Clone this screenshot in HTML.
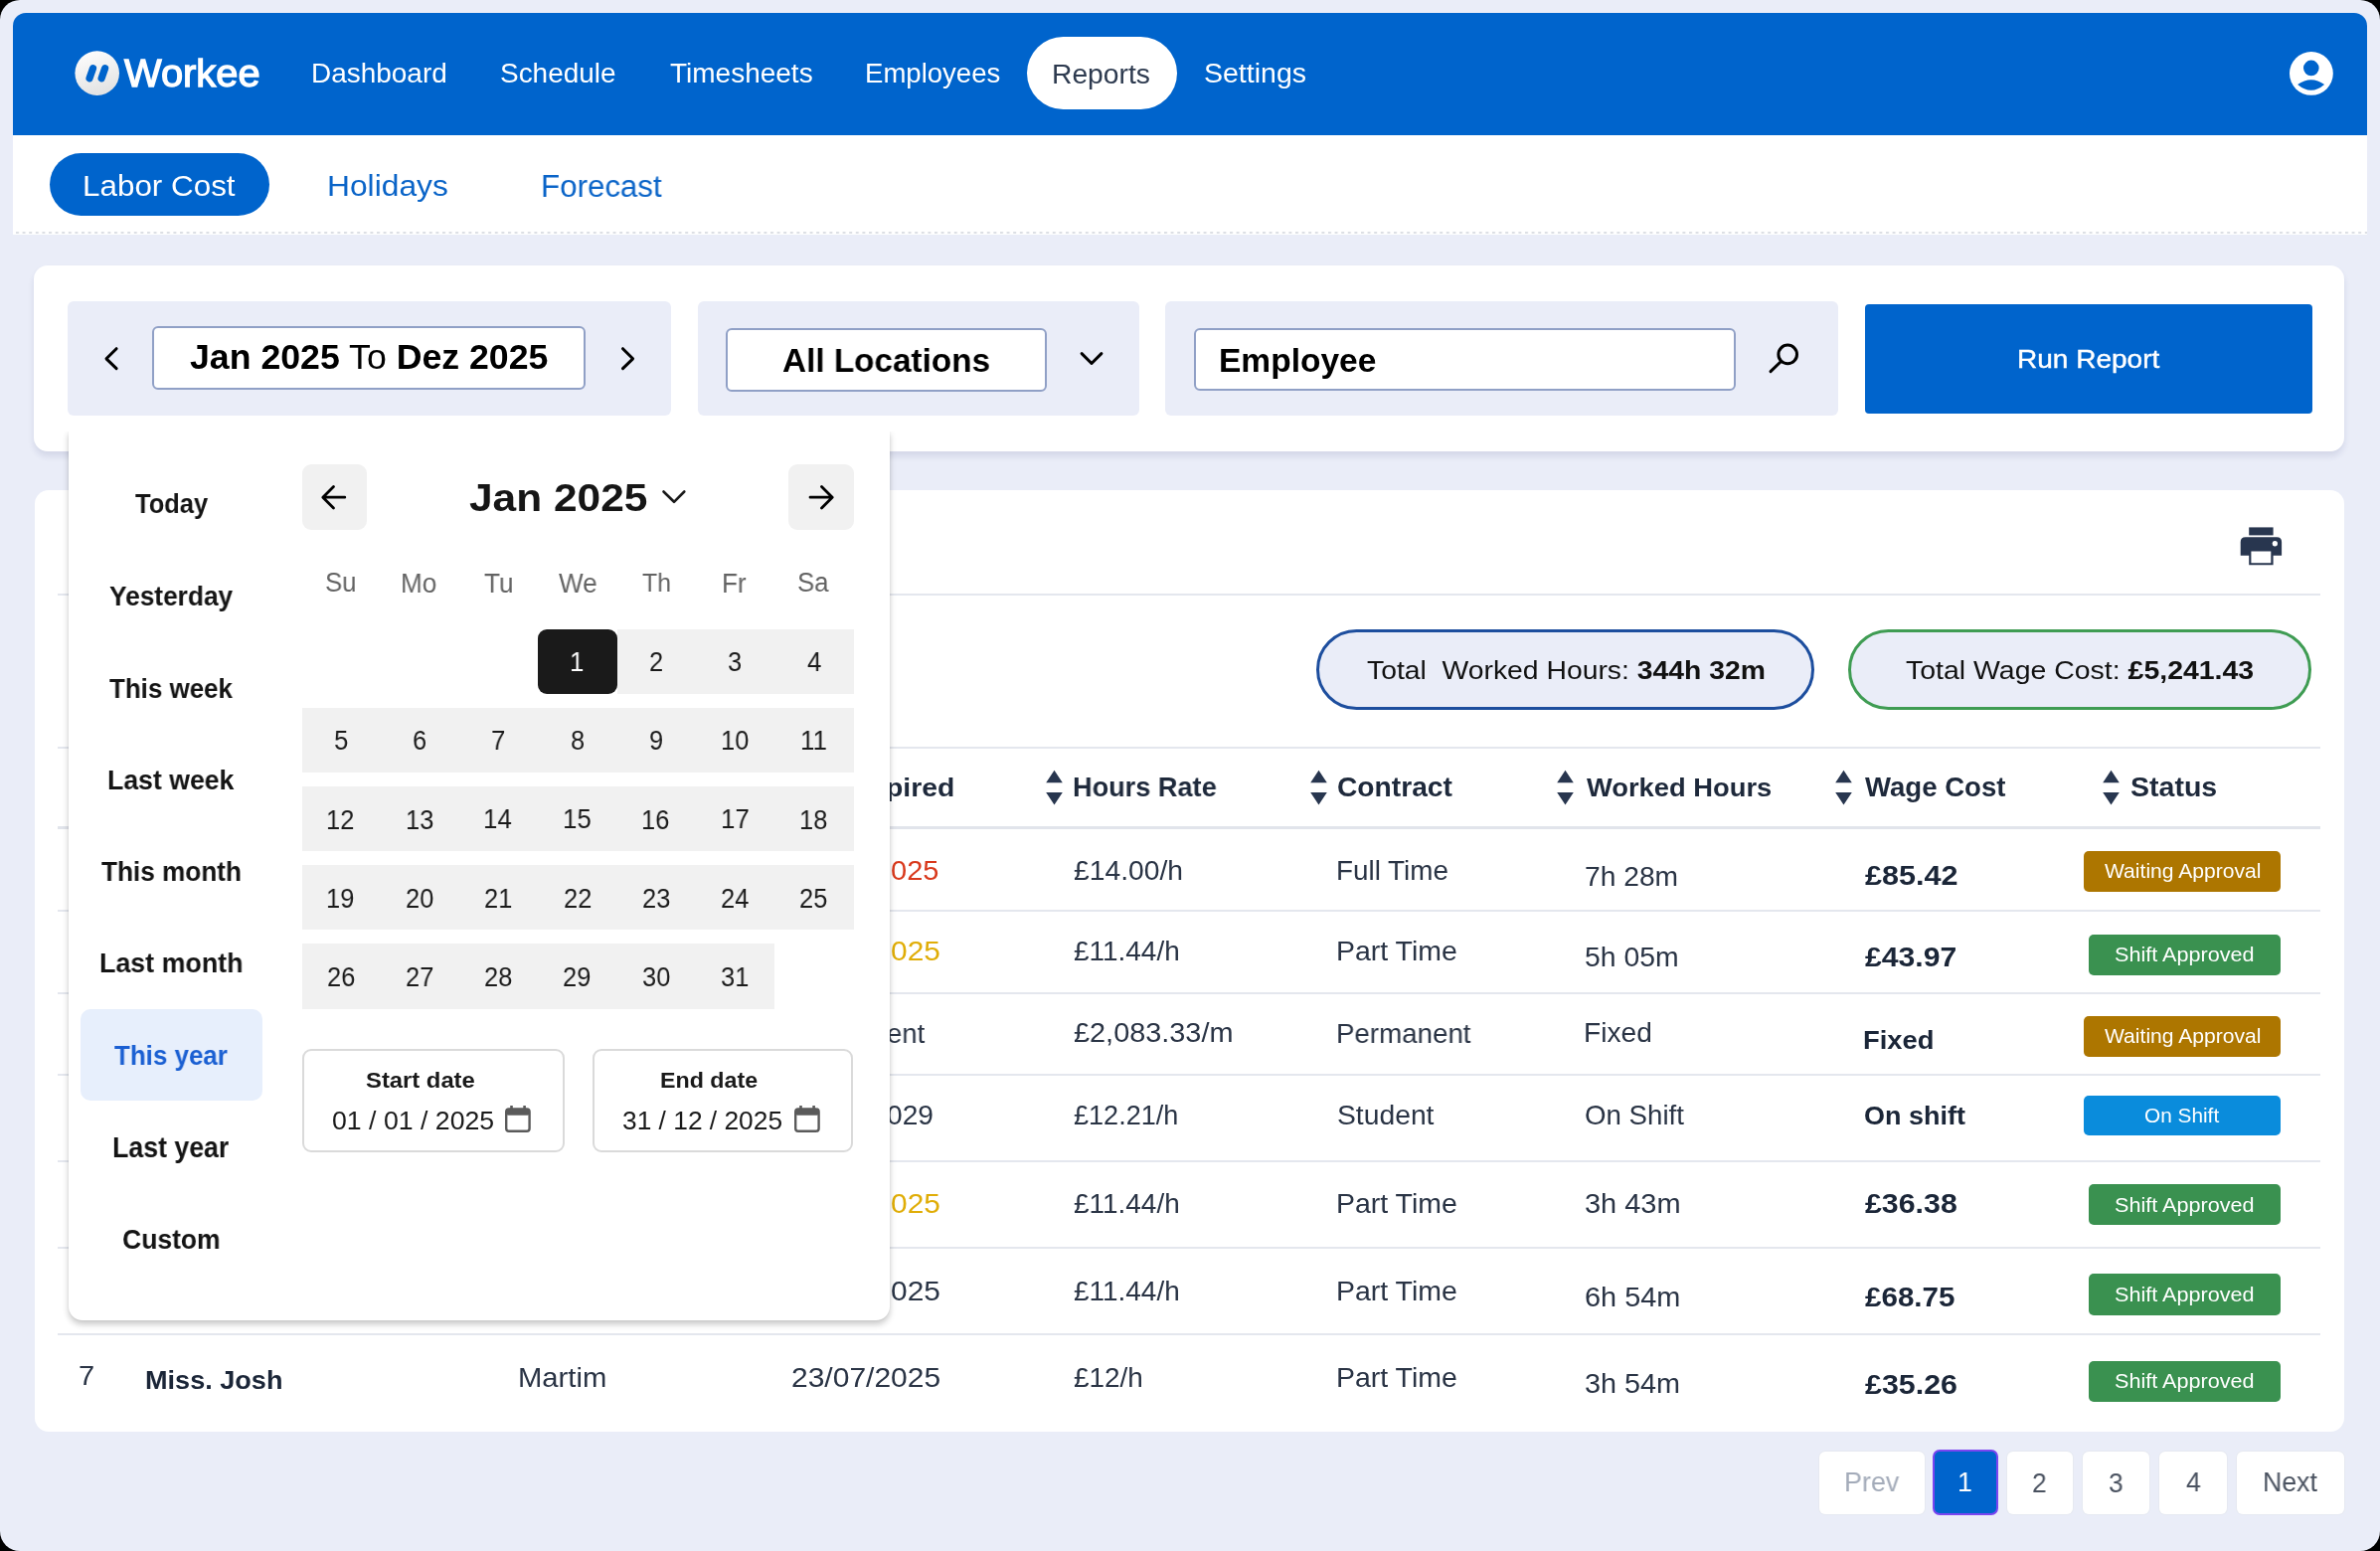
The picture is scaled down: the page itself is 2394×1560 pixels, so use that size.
<!DOCTYPE html>
<html><head><meta charset="utf-8"><style>
html,body{margin:0;padding:0;background:#000;width:2394px;height:1560px;overflow:hidden}
#root{position:absolute;left:0;top:0;width:2394px;height:1560px;background:#EAEDF8;border-radius:20px;overflow:hidden;font-family:"Liberation Sans",sans-serif}
#root div{position:absolute}
.t{white-space:nowrap;will-change:transform}
</style></head><body><div id="root">
<div style="left:13.0px;top:13.0px;width:2368.0px;height:123.0px;background:#0064CC;border-radius:13px 13px 0 0"></div>
<svg style="position:absolute;left:75px;top:51px" width="46" height="46" viewBox="0 0 46 46">
<defs><linearGradient id="lg" x1="0" y1="0" x2="0.3" y2="1"><stop offset="0" stop-color="#fff"/><stop offset="1" stop-color="#e4e4e4"/></linearGradient></defs>
<circle cx="22.7" cy="22.6" r="22.3" fill="url(#lg)"/>
<line x1="18.5" y1="17.7" x2="15" y2="27.8" stroke="#0064CC" stroke-width="7.2" stroke-linecap="round"/>
<line x1="30.6" y1="17.7" x2="27.1" y2="27.8" stroke="#0064CC" stroke-width="7.2" stroke-linecap="round"/>
</svg>
<div class="t" style="left:125.30px;top:54.24px;font-size:39.31px;line-height:39.31px;font-weight:400;color:#fff;transform:scaleX(1.0138);transform-origin:0 0;-webkit-text-stroke:1.3px #fff;">Workee</div>
<div class="t" style="left:312.66px;top:61.35px;font-size:26.90px;line-height:26.90px;font-weight:400;color:#fff;transform:scaleX(1.0398);transform-origin:0 0;">Dashboard</div>
<div class="t" style="left:502.94px;top:61.35px;font-size:26.90px;line-height:26.90px;font-weight:400;color:#fff;transform:scaleX(1.0388);transform-origin:0 0;">Schedule</div>
<div class="t" style="left:673.94px;top:61.35px;font-size:26.90px;line-height:26.90px;font-weight:400;color:#fff;transform:scaleX(1.0410);transform-origin:0 0;">Timesheets</div>
<div class="t" style="left:869.50px;top:61.35px;font-size:26.90px;line-height:26.90px;font-weight:400;color:#fff;transform:scaleX(1.0246);transform-origin:0 0;">Employees</div>
<div class="t" style="left:1210.72px;top:61.35px;font-size:26.90px;line-height:26.90px;font-weight:400;color:#fff;transform:scaleX(1.0602);transform-origin:0 0;">Settings</div>
<div style="left:1033.0px;top:37.0px;width:151.0px;height:73.0px;background:#fff;border-radius:37px"></div>
<div class="t" style="left:1058.04px;top:59.67px;font-size:28.26px;line-height:28.26px;font-weight:400;color:#2D3A4F;">Reports</div>
<svg style="position:absolute;left:2303px;top:51.8px" width="44" height="44" viewBox="0 0 44 44">
<circle cx="21.9" cy="21.9" r="21.9" fill="#fff"/>
<circle cx="21.8" cy="16.4" r="7.8" fill="#0064CC"/>
<path d="M8.1 33 Q21.8 23.5 35.1 33 Q21.8 44.5 8.1 33Z" fill="#0064CC"/>
</svg>
<div style="left:13.0px;top:136.0px;width:2368.0px;height:99.5px;background:#fff"></div>
<svg style="position:absolute;left:15.5px;top:233.3px" width="2365" height="2.2"><defs><pattern id="dots" width="6.6" height="2.2" patternUnits="userSpaceOnUse"><rect width="3" height="2.2" fill="#DCDFE4"/></pattern></defs><rect width="2365" height="2.2" fill="url(#dots)"/></svg>
<div style="left:50.0px;top:154.0px;width:221.0px;height:63.0px;background:#0064CC;border-radius:32px"></div>
<div class="t" style="left:82.89px;top:172.33px;font-size:29.93px;line-height:29.93px;font-weight:400;color:#fff;transform:scaleX(1.0492);transform-origin:0 0;">Labor Cost</div>
<div class="t" style="left:329.16px;top:172.33px;font-size:29.93px;line-height:29.93px;font-weight:400;color:#0A64C8;transform:scaleX(1.0616);transform-origin:0 0;">Holidays</div>
<div class="t" style="left:543.90px;top:171.58px;font-size:31.45px;line-height:31.45px;font-weight:400;color:#0A64C8;transform:scaleX(0.9949);transform-origin:0 0;">Forecast</div>
<div style="left:34.0px;top:267.0px;width:2324.0px;height:187.0px;background:#fff;border-radius:14px;box-shadow:0 5px 6px rgba(40,50,110,0.11)"></div>
<div style="left:68.0px;top:303.0px;width:607.0px;height:115.0px;background:#EAEDF8;border-radius:6px"></div>
<div style="left:702.0px;top:303.0px;width:444.0px;height:115.0px;background:#EAEDF8;border-radius:6px"></div>
<div style="left:1172.0px;top:303.0px;width:677.0px;height:115.0px;background:#EAEDF8;border-radius:6px"></div>
<div style="left:153.0px;top:328.0px;width:436.0px;height:64.0px;background:#fff;border:2px solid #90A0C6;border-radius:6px;box-sizing:border-box"></div>
<div class="t" style="left:190.76px;top:342.47px;font-size:34.86px;line-height:34.86px;font-weight:400;color:#000;transform:scaleX(1.0235);transform-origin:0 0;"><b>Jan 2025</b> To <b>Dez 2025</b></div>
<svg style="position:absolute;left:90px;top:330px" width="60" height="60" viewBox="90 330 60 60"><path d="M117.1 350.7 L107 360.8 L117.1 370.6" fill="none" stroke="#000" stroke-width="3" stroke-linecap="round" stroke-linejoin="round"/></svg>
<svg style="position:absolute;left:600px;top:330px" width="60" height="60" viewBox="600 330 60 60"><path d="M626.5 350.7 L636.6 360.8 L626.5 370.6" fill="none" stroke="#000" stroke-width="3" stroke-linecap="round" stroke-linejoin="round"/></svg>
<div style="left:730.0px;top:329.5px;width:323.0px;height:64.0px;background:#fff;border:2px solid #90A0C6;border-radius:6px;box-sizing:border-box"></div>
<div class="t" style="left:787.37px;top:345.74px;font-size:33.52px;line-height:33.52px;font-weight:700;color:#000;transform:scaleX(0.9936);transform-origin:0 0;">All Locations</div>
<svg style="position:absolute;left:1070px;top:335px" width="50" height="50" viewBox="1070 335 50 50"><path d="M1088.1 355.6 L1098 365.5 L1107.9 355.6" fill="none" stroke="#000" stroke-width="3" stroke-linecap="round" stroke-linejoin="round"/></svg>
<div style="left:1200.5px;top:330.0px;width:545.5px;height:63.0px;background:#fff;border:2px solid #90A0C6;border-radius:6px;box-sizing:border-box"></div>
<div class="t" style="left:1226.32px;top:345.74px;font-size:33.52px;line-height:33.52px;font-weight:700;color:#000;">Employee</div>
<svg style="position:absolute;left:1770px;top:335px" width="50" height="50" viewBox="1770 335 50 50"><circle cx="1798.2" cy="356.4" r="9.3" fill="none" stroke="#000" stroke-width="3"/><path d="M1791 364 L1781 373.7" stroke="#000" stroke-width="3" stroke-linecap="round"/></svg>
<div style="left:1876.0px;top:306.0px;width:450.0px;height:110.0px;background:#0064CC;border-radius:4px"></div>
<div class="t" style="left:2028.56px;top:348.31px;font-size:26.38px;line-height:26.38px;font-weight:400;color:#fff;transform:scaleX(1.0623);transform-origin:0 0;-webkit-text-stroke:0.4px #fff;">Run Report</div>
<div style="left:35.0px;top:493.0px;width:2323.0px;height:947.0px;background:#fff;border-radius:14px"></div>
<div style="left:58.0px;top:596.5px;width:2276.0px;height:2.0px;background:#E4E7EE"></div>
<div style="left:58.0px;top:750.5px;width:2276.0px;height:2.0px;background:#E4E7EE"></div>
<div style="left:58.0px;top:830.5px;width:2276.0px;height:3.0px;background:#E1E4EB"></div>
<div style="left:58.0px;top:915.0px;width:2276.0px;height:2.0px;background:#E4E7EE"></div>
<div style="left:58.0px;top:997.5px;width:2276.0px;height:2.0px;background:#E4E7EE"></div>
<div style="left:58.0px;top:1079.5px;width:2276.0px;height:2.0px;background:#E4E7EE"></div>
<div style="left:58.0px;top:1166.5px;width:2276.0px;height:2.0px;background:#E4E7EE"></div>
<div style="left:58.0px;top:1253.5px;width:2276.0px;height:2.0px;background:#E4E7EE"></div>
<div style="left:58.0px;top:1340.5px;width:2276.0px;height:2.0px;background:#E4E7EE"></div>
<svg style="position:absolute;left:2253px;top:530px" width="44" height="40" viewBox="0 0 44 40">
<rect x="9.2" y="0.4" width="24.4" height="8" fill="#28364F"/>
<path d="M0.7 15.3 Q0.7 10.3 5.7 10.3 L37.1 10.3 Q42.1 10.3 42.1 15.3 L42.1 28.7 L33.6 28.7 L33.6 38.3 L9.2 38.3 L9.2 28.7 L0.7 28.7Z M11.4 24.4 L11.4 36.2 L31.3 36.2 L31.3 24.4Z" fill="#28364F" fill-rule="evenodd"/>
<circle cx="35.3" cy="16.7" r="2.7" fill="#fff"/>
</svg>
<div style="left:1324.0px;top:633.0px;width:501.0px;height:80.5px;background:#EAEDF8;border:3px solid #1D4E9E;border-radius:41px;box-sizing:border-box"></div>
<div class="t" style="left:1374.53px;top:660.89px;font-size:26.62px;line-height:26.62px;font-weight:400;color:#111;transform:scaleX(1.0641);transform-origin:0 0;">Total&nbsp; Worked Hours: <b>344h 32m</b></div>
<div style="left:1859.0px;top:633.0px;width:466.0px;height:80.5px;background:#EAEDF8;border:3px solid #3F9C53;border-radius:41px;box-sizing:border-box"></div>
<div class="t" style="left:1917.43px;top:660.89px;font-size:26.62px;line-height:26.62px;font-weight:400;color:#111;transform:scaleX(1.0696);transform-origin:0 0;">Total Wage Cost: <b>£5,241.43</b></div>
<div class="t" style="left:891.16px;top:778.99px;font-size:26.62px;line-height:26.62px;font-weight:700;color:#1E293B;transform:scaleX(1.0661);transform-origin:0 0;">pired</div>
<svg style="position:absolute;left:1051.6px;top:774px" width="17" height="36" viewBox="0 0 17 36"><path d="M8.5 0.7 L16.8 13.3 L0.2 13.3Z M8.5 35.6 L16.8 23 L0.2 23Z" fill="#28364F"/></svg>
<div class="t" style="left:1079.24px;top:777.81px;font-size:27.97px;line-height:27.97px;font-weight:700;color:#1E293B;transform:scaleX(0.9698);transform-origin:0 0;">Hours Rate</div>
<svg style="position:absolute;left:1317.5px;top:774px" width="17" height="36" viewBox="0 0 17 36"><path d="M8.5 0.7 L16.8 13.3 L0.2 13.3Z M8.5 35.6 L16.8 23 L0.2 23Z" fill="#28364F"/></svg>
<div class="t" style="left:1345.17px;top:778.01px;font-size:27.57px;line-height:27.57px;font-weight:700;color:#1E293B;transform:scaleX(1.0229);transform-origin:0 0;">Contract</div>
<svg style="position:absolute;left:1566.0px;top:774px" width="17" height="36" viewBox="0 0 17 36"><path d="M8.5 0.7 L16.8 13.3 L0.2 13.3Z M8.5 35.6 L16.8 23 L0.2 23Z" fill="#28364F"/></svg>
<div class="t" style="left:1595.60px;top:778.99px;font-size:26.62px;line-height:26.62px;font-weight:700;color:#1E293B;transform:scaleX(1.0269);transform-origin:0 0;">Worked Hours</div>
<svg style="position:absolute;left:1846.0px;top:774px" width="17" height="36" viewBox="0 0 17 36"><path d="M8.5 0.7 L16.8 13.3 L0.2 13.3Z M8.5 35.6 L16.8 23 L0.2 23Z" fill="#28364F"/></svg>
<div class="t" style="left:1875.50px;top:778.01px;font-size:27.57px;line-height:27.57px;font-weight:700;color:#1E293B;">Wage Cost</div>
<svg style="position:absolute;left:2115.0px;top:774px" width="17" height="36" viewBox="0 0 17 36"><path d="M8.5 0.7 L16.8 13.3 L0.2 13.3Z M8.5 35.6 L16.8 23 L0.2 23Z" fill="#28364F"/></svg>
<div class="t" style="left:2143.14px;top:778.01px;font-size:27.57px;line-height:27.57px;font-weight:700;color:#1E293B;transform:scaleX(1.0352);transform-origin:0 0;">Status</div>
<div class="t" style="left:895.84px;top:862.07px;font-size:27.86px;line-height:27.86px;font-weight:400;color:#D9391C;transform:scaleX(1.0418);transform-origin:0 0;">025</div>
<div class="t" style="left:1080.15px;top:863.05px;font-size:26.90px;line-height:26.90px;font-weight:400;color:#2A3445;transform:scaleX(1.0512);transform-origin:0 0;">£14.00/h</div>
<div class="t" style="left:1344.17px;top:863.05px;font-size:26.90px;line-height:26.90px;font-weight:400;color:#2A3445;transform:scaleX(1.0350);transform-origin:0 0;">Full Time</div>
<div class="t" style="left:1594.09px;top:869.15px;font-size:26.90px;line-height:26.90px;font-weight:400;color:#2A3445;transform:scaleX(1.0491);transform-origin:0 0;">7h 28m</div>
<div class="t" style="left:1875.79px;top:867.90px;font-size:27.00px;line-height:27.00px;font-weight:700;color:#1B2638;transform:scaleX(1.1333);transform-origin:0 0;">£85.42</div>
<div style="left:2096.0px;top:855.8px;width:198.0px;height:41.0px;background:#AD7600;border-radius:5px"></div>
<div class="t" style="left:2116.89px;top:867.31px;font-size:19.59px;line-height:19.59px;font-weight:400;color:#fff;transform:scaleX(1.0771);transform-origin:0 0;">Waiting Approval</div>
<div class="t" style="left:895.80px;top:942.97px;font-size:27.86px;line-height:27.86px;font-weight:400;color:#E0AD07;transform:scaleX(1.0735);transform-origin:0 0;">025</div>
<div class="t" style="left:1080.16px;top:943.95px;font-size:26.90px;line-height:26.90px;font-weight:400;color:#2A3445;transform:scaleX(1.0394);transform-origin:0 0;">£11.44/h</div>
<div class="t" style="left:1344.12px;top:943.95px;font-size:26.90px;line-height:26.90px;font-weight:400;color:#2A3445;transform:scaleX(1.0586);transform-origin:0 0;">Part Time</div>
<div class="t" style="left:1594.36px;top:949.85px;font-size:26.90px;line-height:26.90px;font-weight:400;color:#2A3445;transform:scaleX(1.0550);transform-origin:0 0;">5h 05m</div>
<div class="t" style="left:1875.80px;top:950.30px;font-size:27.00px;line-height:27.00px;font-weight:700;color:#1B2638;transform:scaleX(1.1173);transform-origin:0 0;">£43.97</div>
<div style="left:2101.0px;top:939.8px;width:193.0px;height:41.0px;background:#3A9150;border-radius:5px"></div>
<div class="t" style="left:2127.23px;top:950.91px;font-size:19.59px;line-height:19.59px;font-weight:400;color:#fff;transform:scaleX(1.1042);transform-origin:0 0;">Shift Approved</div>
<div class="t" style="left:891.90px;top:1024.77px;font-size:28.26px;line-height:28.26px;font-weight:400;color:#2A3445;transform:scaleX(0.9718);transform-origin:0 0;">ent</div>
<div class="t" style="left:1080.13px;top:1026.45px;font-size:26.90px;line-height:26.90px;font-weight:400;color:#2A3445;transform:scaleX(1.0735);transform-origin:0 0;">£2,083.33/m</div>
<div class="t" style="left:1344.18px;top:1024.77px;font-size:28.26px;line-height:28.26px;font-weight:400;color:#2A3445;transform:scaleX(0.9802);transform-origin:0 0;">Permanent</div>
<div class="t" style="left:1593.25px;top:1026.45px;font-size:26.90px;line-height:26.90px;font-weight:400;color:#2A3445;transform:scaleX(1.0459);transform-origin:0 0;">Fixed</div>
<div class="t" style="left:1874.32px;top:1033.27px;font-size:26.07px;line-height:26.07px;font-weight:700;color:#1B2638;transform:scaleX(1.0503);transform-origin:0 0;">Fixed</div>
<div style="left:2096.0px;top:1022.4px;width:198.0px;height:40.9px;background:#AD7600;border-radius:5px"></div>
<div class="t" style="left:2116.89px;top:1033.31px;font-size:19.59px;line-height:19.59px;font-weight:400;color:#fff;transform:scaleX(1.0771);transform-origin:0 0;">Waiting Approval</div>
<div class="t" style="left:892.37px;top:1107.77px;font-size:27.86px;line-height:27.86px;font-weight:400;color:#2A3445;transform:scaleX(1.0110);transform-origin:0 0;">029</div>
<div class="t" style="left:1080.19px;top:1108.75px;font-size:26.90px;line-height:26.90px;font-weight:400;color:#2A3445;transform:scaleX(1.0061);transform-origin:0 0;">£12.21/h</div>
<div class="t" style="left:1345.13px;top:1108.75px;font-size:26.90px;line-height:26.90px;font-weight:400;color:#2A3445;transform:scaleX(1.0513);transform-origin:0 0;">Student</div>
<div class="t" style="left:1594.25px;top:1108.75px;font-size:26.90px;line-height:26.90px;font-weight:400;color:#2A3445;transform:scaleX(1.0287);transform-origin:0 0;">On Shift</div>
<div class="t" style="left:1875.02px;top:1108.97px;font-size:26.07px;line-height:26.07px;font-weight:700;color:#1B2638;transform:scaleX(1.0349);transform-origin:0 0;">On shift</div>
<div style="left:2096.0px;top:1101.6px;width:198.0px;height:40.9px;background:#0A8CDC;border-radius:5px"></div>
<div class="t" style="left:2157.36px;top:1112.71px;font-size:19.59px;line-height:19.59px;font-weight:400;color:#fff;transform:scaleX(1.0627);transform-origin:0 0;">On Shift</div>
<div class="t" style="left:895.80px;top:1197.17px;font-size:27.86px;line-height:27.86px;font-weight:400;color:#E0AD07;transform:scaleX(1.0735);transform-origin:0 0;">025</div>
<div class="t" style="left:1080.16px;top:1198.15px;font-size:26.90px;line-height:26.90px;font-weight:400;color:#2A3445;transform:scaleX(1.0394);transform-origin:0 0;">£11.44/h</div>
<div class="t" style="left:1344.12px;top:1198.15px;font-size:26.90px;line-height:26.90px;font-weight:400;color:#2A3445;transform:scaleX(1.0586);transform-origin:0 0;">Part Time</div>
<div class="t" style="left:1594.34px;top:1198.15px;font-size:26.90px;line-height:26.90px;font-weight:400;color:#2A3445;transform:scaleX(1.0769);transform-origin:0 0;">3h 43m</div>
<div class="t" style="left:1875.80px;top:1197.50px;font-size:27.00px;line-height:27.00px;font-weight:700;color:#1B2638;transform:scaleX(1.1234);transform-origin:0 0;">£36.38</div>
<div style="left:2101.0px;top:1190.6px;width:193.0px;height:41.4px;background:#3A9150;border-radius:5px"></div>
<div class="t" style="left:2127.23px;top:1202.61px;font-size:19.59px;line-height:19.59px;font-weight:400;color:#fff;transform:scaleX(1.1042);transform-origin:0 0;">Shift Approved</div>
<div class="t" style="left:895.80px;top:1285.07px;font-size:27.86px;line-height:27.86px;font-weight:400;color:#2A3445;transform:scaleX(1.0735);transform-origin:0 0;">025</div>
<div class="t" style="left:1080.16px;top:1286.05px;font-size:26.90px;line-height:26.90px;font-weight:400;color:#2A3445;transform:scaleX(1.0394);transform-origin:0 0;">£11.44/h</div>
<div class="t" style="left:1344.12px;top:1286.05px;font-size:26.90px;line-height:26.90px;font-weight:400;color:#2A3445;transform:scaleX(1.0586);transform-origin:0 0;">Part Time</div>
<div class="t" style="left:1594.06px;top:1291.95px;font-size:26.90px;line-height:26.90px;font-weight:400;color:#2A3445;transform:scaleX(1.0745);transform-origin:0 0;">6h 54m</div>
<div class="t" style="left:1875.80px;top:1292.00px;font-size:27.00px;line-height:27.00px;font-weight:700;color:#1B2638;transform:scaleX(1.0958);transform-origin:0 0;">£68.75</div>
<div style="left:2101.0px;top:1281.3px;width:193.0px;height:41.4px;background:#3A9150;border-radius:5px"></div>
<div class="t" style="left:2127.23px;top:1292.91px;font-size:19.59px;line-height:19.59px;font-weight:400;color:#fff;transform:scaleX(1.1042);transform-origin:0 0;">Shift Approved</div>
<div class="t" style="left:796.00px;top:1372.85px;font-size:26.90px;line-height:26.90px;font-weight:400;color:#2A3445;transform:scaleX(1.1158);transform-origin:0 0;">23/07/2025</div>
<div class="t" style="left:1080.16px;top:1372.85px;font-size:26.90px;line-height:26.90px;font-weight:400;color:#2A3445;transform:scaleX(1.0389);transform-origin:0 0;">£12/h</div>
<div class="t" style="left:1344.12px;top:1372.85px;font-size:26.90px;line-height:26.90px;font-weight:400;color:#2A3445;transform:scaleX(1.0586);transform-origin:0 0;">Part Time</div>
<div class="t" style="left:1594.35px;top:1379.35px;font-size:26.90px;line-height:26.90px;font-weight:400;color:#2A3445;transform:scaleX(1.0711);transform-origin:0 0;">3h 54m</div>
<div class="t" style="left:1875.80px;top:1379.60px;font-size:27.00px;line-height:27.00px;font-weight:700;color:#1B2638;transform:scaleX(1.1252);transform-origin:0 0;">£35.26</div>
<div style="left:2101.0px;top:1368.5px;width:193.0px;height:41.5px;background:#3A9150;border-radius:5px"></div>
<div class="t" style="left:2127.23px;top:1380.11px;font-size:19.59px;line-height:19.59px;font-weight:400;color:#fff;transform:scaleX(1.1042);transform-origin:0 0;">Shift Approved</div>
<div class="t" style="left:79.35px;top:1370.30px;font-size:27.39px;line-height:27.39px;font-weight:400;color:#2A3445;transform:scaleX(1.0591);transform-origin:0 0;">7</div>
<div class="t" style="left:146.34px;top:1375.27px;font-size:26.07px;line-height:26.07px;font-weight:700;color:#1B2638;transform:scaleX(1.0388);transform-origin:0 0;">Miss. Josh</div>
<div class="t" style="left:520.96px;top:1372.95px;font-size:26.90px;line-height:26.90px;font-weight:400;color:#2A3445;transform:scaleX(1.0873);transform-origin:0 0;">Martim</div>
<div style="left:1830.4px;top:1459.6px;width:105.9px;height:63.0px;background:#fff;border-radius:6px;box-shadow:0 0 0 1px #E6E9F1"></div>
<div class="t" style="left:1854.95px;top:1477.46px;font-size:27.68px;line-height:27.68px;font-weight:400;color:#A3ABB9;transform:scaleX(0.9719);transform-origin:0 0;">Prev</div>
<div style="left:1944.3px;top:1457.9px;width:66.0px;height:66.1px;background:#0064CC;border:2px solid #7A45F0;border-radius:7px;box-sizing:border-box"></div>
<div class="t" style="left:1969.49px;top:1477.46px;font-size:27.68px;line-height:27.68px;font-weight:400;color:#fff;transform:scaleX(0.9650);transform-origin:0 0;">1</div>
<div style="left:2018.5px;top:1459.6px;width:66.1px;height:63.0px;background:#fff;border-radius:6px;box-shadow:0 0 0 1px #E6E9F1"></div>
<div class="t" style="left:2044.24px;top:1477.66px;font-size:27.29px;line-height:27.29px;font-weight:400;color:#4A5260;transform:scaleX(0.9650);transform-origin:0 0;">2</div>
<div style="left:2094.6px;top:1459.6px;width:67.3px;height:63.0px;background:#fff;border-radius:6px;box-shadow:0 0 0 1px #E6E9F1"></div>
<div class="t" style="left:2120.94px;top:1477.66px;font-size:27.29px;line-height:27.29px;font-weight:400;color:#4A5260;transform:scaleX(0.9650);transform-origin:0 0;">3</div>
<div style="left:2172.4px;top:1459.6px;width:67.2px;height:63.0px;background:#fff;border-radius:6px;box-shadow:0 0 0 1px #E6E9F1"></div>
<div class="t" style="left:2198.72px;top:1477.46px;font-size:27.68px;line-height:27.68px;font-weight:400;color:#4A5260;transform:scaleX(0.9650);transform-origin:0 0;">4</div>
<div style="left:2250.2px;top:1459.6px;width:107.8px;height:63.0px;background:#fff;border-radius:6px;box-shadow:0 0 0 1px #E6E9F1"></div>
<div class="t" style="left:2275.65px;top:1477.46px;font-size:27.68px;line-height:27.68px;font-weight:400;color:#4A5260;transform:scaleX(0.9650);transform-origin:0 0;">Next</div>
<div style="left:68.5px;top:433.0px;width:826.0px;height:895.0px;background:#fff;border-radius:0 0 14px 14px;box-shadow:0 4px 6px rgba(0,0,0,0.22), 0 0 2px rgba(0,0,0,0.09)"></div>
<div style="left:62.0px;top:426.0px;width:839.0px;height:8.0px;background:#fff"></div>
<div style="left:81.0px;top:1015.0px;width:182.6px;height:92.0px;background:#E7EFFC;border-radius:10px"></div>
<div class="t" style="left:135.55px;top:493.34px;font-size:27.31px;line-height:27.31px;font-weight:700;color:#141414;transform:scaleX(0.9324);transform-origin:0 0;">Today</div>
<div class="t" style="left:109.67px;top:585.84px;font-size:27.31px;line-height:27.31px;font-weight:700;color:#141414;transform:scaleX(0.9621);transform-origin:0 0;">Yesterday</div>
<div class="t" style="left:110.04px;top:678.54px;font-size:27.31px;line-height:27.31px;font-weight:700;color:#141414;transform:scaleX(0.9496);transform-origin:0 0;">This week</div>
<div class="t" style="left:107.87px;top:770.64px;font-size:27.31px;line-height:27.31px;font-weight:700;color:#141414;transform:scaleX(0.9762);transform-origin:0 0;">Last week</div>
<div class="t" style="left:102.34px;top:863.14px;font-size:27.31px;line-height:27.31px;font-weight:700;color:#141414;transform:scaleX(0.9576);transform-origin:0 0;">This month</div>
<div class="t" style="left:99.76px;top:955.44px;font-size:27.31px;line-height:27.31px;font-weight:700;color:#141414;transform:scaleX(0.9820);transform-origin:0 0;">Last month</div>
<div class="t" style="left:115.14px;top:1048.24px;font-size:27.31px;line-height:27.31px;font-weight:700;color:#1A5FD2;transform:scaleX(0.9496);transform-origin:0 0;">This year</div>
<div class="t" style="left:112.56px;top:1139.55px;font-size:28.70px;line-height:28.70px;font-weight:700;color:#141414;transform:scaleX(0.9312);transform-origin:0 0;">Last year</div>
<div class="t" style="left:123.24px;top:1232.06px;font-size:28.29px;line-height:28.29px;font-weight:700;color:#141414;transform:scaleX(0.9372);transform-origin:0 0;">Custom</div>
<div style="left:303.5px;top:466.8px;width:65.7px;height:66.3px;background:#F1F1F1;border-radius:9px"></div>
<div style="left:792.7px;top:466.8px;width:66.1px;height:66.3px;background:#F1F1F1;border-radius:9px"></div>
<svg style="position:absolute;left:300px;top:470px" width="600" height="60" viewBox="300 470 600 60"><path d="M346.8 500.2 H325 M335.5 489.5 L324.8 500.2 L335.5 510.9" fill="none" stroke="#000" stroke-width="2.8" stroke-linecap="round" stroke-linejoin="round"/><path d="M815 500.2 H837 M826.5 489.5 L837.2 500.2 L826.5 510.9" fill="none" stroke="#000" stroke-width="2.8" stroke-linecap="round" stroke-linejoin="round"/><path d="M667.5 494.5 L678 504.8 L688.3 494.5" fill="none" stroke="#1A1A1A" stroke-width="2.6" stroke-linecap="round" stroke-linejoin="round"/></svg>
<div class="t" style="left:471.66px;top:481.01px;font-size:39.57px;line-height:39.57px;font-weight:700;color:#161616;transform:scaleX(1.0736);transform-origin:0 0;">Jan 2025</div>
<div class="t" style="left:327.33px;top:573.44px;font-size:26.71px;line-height:26.71px;font-weight:400;color:#636363;transform:scaleX(0.9650);transform-origin:0 0;">Su</div>
<div class="t" style="left:403.40px;top:572.75px;font-size:27.10px;line-height:27.10px;font-weight:400;color:#636363;transform:scaleX(0.9650);transform-origin:0 0;">Mo</div>
<div class="t" style="left:487.21px;top:572.75px;font-size:27.10px;line-height:27.10px;font-weight:400;color:#636363;transform:scaleX(0.9650);transform-origin:0 0;">Tu</div>
<div class="t" style="left:561.87px;top:572.75px;font-size:27.10px;line-height:27.10px;font-weight:400;color:#636363;transform:scaleX(0.9650);transform-origin:0 0;">We</div>
<div class="t" style="left:646.06px;top:573.90px;font-size:25.79px;line-height:25.79px;font-weight:400;color:#636363;transform:scaleX(0.9650);transform-origin:0 0;">Th</div>
<div class="t" style="left:726.16px;top:572.75px;font-size:27.10px;line-height:27.10px;font-weight:400;color:#636363;transform:scaleX(0.9650);transform-origin:0 0;">Fr</div>
<div class="t" style="left:802.29px;top:573.44px;font-size:26.71px;line-height:26.71px;font-weight:400;color:#636363;transform:scaleX(0.9650);transform-origin:0 0;">Sa</div>
<div style="left:620.5px;top:632.6px;width:238.3px;height:65.3px;background:#F1F1F1"></div>
<div style="left:303.5px;top:711.7px;width:555.3px;height:65.4px;background:#F1F1F1"></div>
<div style="left:303.5px;top:790.8px;width:555.3px;height:65.4px;background:#F1F1F1"></div>
<div style="left:303.5px;top:869.9px;width:555.3px;height:65.4px;background:#F1F1F1"></div>
<div style="left:303.5px;top:949.0px;width:475.8px;height:65.6px;background:#F1F1F1"></div>
<div style="left:541.3px;top:632.6px;width:79.5px;height:65.0px;background:#1A1A1A;border-radius:9px"></div>
<div class="t" style="left:573.13px;top:652.19px;font-size:27.83px;line-height:27.83px;font-weight:400;color:#fff;transform:scaleX(0.9300);transform-origin:0 0;">1</div>
<div class="t" style="left:652.92px;top:652.39px;font-size:27.43px;line-height:27.43px;font-weight:400;color:#1A1A1A;transform:scaleX(0.9300);transform-origin:0 0;">2</div>
<div class="t" style="left:732.22px;top:652.39px;font-size:27.43px;line-height:27.43px;font-weight:400;color:#1A1A1A;transform:scaleX(0.9300);transform-origin:0 0;">3</div>
<div class="t" style="left:811.55px;top:652.19px;font-size:27.83px;line-height:27.83px;font-weight:400;color:#1A1A1A;transform:scaleX(0.9300);transform-origin:0 0;">4</div>
<div class="t" style="left:335.62px;top:731.29px;font-size:27.83px;line-height:27.83px;font-weight:400;color:#1A1A1A;transform:scaleX(0.9300);transform-origin:0 0;">5</div>
<div class="t" style="left:414.89px;top:731.49px;font-size:27.43px;line-height:27.43px;font-weight:400;color:#1A1A1A;transform:scaleX(0.9300);transform-origin:0 0;">6</div>
<div class="t" style="left:494.22px;top:731.29px;font-size:27.83px;line-height:27.83px;font-weight:400;color:#1A1A1A;transform:scaleX(0.9300);transform-origin:0 0;">7</div>
<div class="t" style="left:573.56px;top:731.49px;font-size:27.43px;line-height:27.43px;font-weight:400;color:#1A1A1A;transform:scaleX(0.9300);transform-origin:0 0;">8</div>
<div class="t" style="left:652.92px;top:731.49px;font-size:27.43px;line-height:27.43px;font-weight:400;color:#1A1A1A;transform:scaleX(0.9300);transform-origin:0 0;">9</div>
<div class="t" style="left:724.63px;top:731.49px;font-size:27.43px;line-height:27.43px;font-weight:400;color:#1A1A1A;transform:scaleX(0.9300);transform-origin:0 0;">10</div>
<div class="t" style="left:804.82px;top:731.29px;font-size:27.83px;line-height:27.83px;font-weight:400;color:#1A1A1A;transform:scaleX(0.9300);transform-origin:0 0;">11</div>
<div class="t" style="left:328.32px;top:810.59px;font-size:27.43px;line-height:27.43px;font-weight:400;color:#1A1A1A;transform:scaleX(0.9300);transform-origin:0 0;">12</div>
<div class="t" style="left:407.50px;top:810.59px;font-size:27.43px;line-height:27.43px;font-weight:400;color:#1A1A1A;transform:scaleX(0.9300);transform-origin:0 0;">13</div>
<div class="t" style="left:486.46px;top:810.39px;font-size:27.83px;line-height:27.83px;font-weight:400;color:#1A1A1A;transform:scaleX(0.9300);transform-origin:0 0;">14</div>
<div class="t" style="left:565.88px;top:810.39px;font-size:27.83px;line-height:27.83px;font-weight:400;color:#1A1A1A;transform:scaleX(0.9300);transform-origin:0 0;">15</div>
<div class="t" style="left:645.40px;top:810.59px;font-size:27.43px;line-height:27.43px;font-weight:400;color:#1A1A1A;transform:scaleX(0.9300);transform-origin:0 0;">16</div>
<div class="t" style="left:724.61px;top:810.39px;font-size:27.83px;line-height:27.83px;font-weight:400;color:#1A1A1A;transform:scaleX(0.9300);transform-origin:0 0;">17</div>
<div class="t" style="left:804.00px;top:810.59px;font-size:27.43px;line-height:27.43px;font-weight:400;color:#1A1A1A;transform:scaleX(0.9300);transform-origin:0 0;">18</div>
<div class="t" style="left:328.26px;top:889.69px;font-size:27.43px;line-height:27.43px;font-weight:400;color:#1A1A1A;transform:scaleX(0.9300);transform-origin:0 0;">19</div>
<div class="t" style="left:407.75px;top:889.69px;font-size:27.43px;line-height:27.43px;font-weight:400;color:#1A1A1A;transform:scaleX(0.9300);transform-origin:0 0;">20</div>
<div class="t" style="left:487.18px;top:889.69px;font-size:27.43px;line-height:27.43px;font-weight:400;color:#1A1A1A;transform:scaleX(0.9300);transform-origin:0 0;">21</div>
<div class="t" style="left:566.54px;top:889.69px;font-size:27.43px;line-height:27.43px;font-weight:400;color:#1A1A1A;transform:scaleX(0.9300);transform-origin:0 0;">22</div>
<div class="t" style="left:645.72px;top:889.69px;font-size:27.43px;line-height:27.43px;font-weight:400;color:#1A1A1A;transform:scaleX(0.9300);transform-origin:0 0;">23</div>
<div class="t" style="left:724.89px;top:889.69px;font-size:27.43px;line-height:27.43px;font-weight:400;color:#1A1A1A;transform:scaleX(0.9300);transform-origin:0 0;">24</div>
<div class="t" style="left:804.32px;top:889.69px;font-size:27.43px;line-height:27.43px;font-weight:400;color:#1A1A1A;transform:scaleX(0.9300);transform-origin:0 0;">25</div>
<div class="t" style="left:328.52px;top:968.79px;font-size:27.43px;line-height:27.43px;font-weight:400;color:#1A1A1A;transform:scaleX(0.9300);transform-origin:0 0;">26</div>
<div class="t" style="left:407.94px;top:968.79px;font-size:27.43px;line-height:27.43px;font-weight:400;color:#1A1A1A;transform:scaleX(0.9300);transform-origin:0 0;">27</div>
<div class="t" style="left:487.12px;top:968.79px;font-size:27.43px;line-height:27.43px;font-weight:400;color:#1A1A1A;transform:scaleX(0.9300);transform-origin:0 0;">28</div>
<div class="t" style="left:566.48px;top:968.79px;font-size:27.43px;line-height:27.43px;font-weight:400;color:#1A1A1A;transform:scaleX(0.9300);transform-origin:0 0;">29</div>
<div class="t" style="left:645.78px;top:968.79px;font-size:27.43px;line-height:27.43px;font-weight:400;color:#1A1A1A;transform:scaleX(0.9300);transform-origin:0 0;">30</div>
<div class="t" style="left:725.21px;top:968.79px;font-size:27.43px;line-height:27.43px;font-weight:400;color:#1A1A1A;transform:scaleX(0.9300);transform-origin:0 0;">31</div>
<div style="left:304.0px;top:1055.4px;width:264.2px;height:103.9px;border:2px solid #DADADA;border-radius:9px;box-sizing:border-box"></div>
<div style="left:596.0px;top:1055.4px;width:262.2px;height:103.9px;border:2px solid #DADADA;border-radius:9px;box-sizing:border-box"></div>
<div class="t" style="left:368.19px;top:1075.60px;font-size:22.21px;line-height:22.21px;font-weight:700;color:#1A1A1A;transform:scaleX(1.0720);transform-origin:0 0;">Start date</div>
<div class="t" style="left:664.49px;top:1075.60px;font-size:22.21px;line-height:22.21px;font-weight:700;color:#1A1A1A;transform:scaleX(1.0471);transform-origin:0 0;">End date</div>
<div class="t" style="left:334.23px;top:1114.97px;font-size:25.66px;line-height:25.66px;font-weight:400;color:#1A1A1A;transform:scaleX(1.0399);transform-origin:0 0;">01 / 01 / 2025</div>
<div class="t" style="left:625.75px;top:1114.97px;font-size:25.66px;line-height:25.66px;font-weight:400;color:#1A1A1A;transform:scaleX(1.0263);transform-origin:0 0;">31 / 12 / 2025</div>
<svg style="position:absolute;left:508.4px;top:1112.2px" width="26" height="27" viewBox="0 0 26 27"><rect x="1.2" y="3.4" width="23.4" height="22.4" rx="2.8" fill="none" stroke="#5A5A5A" stroke-width="2.4"/><rect x="1.2" y="3.4" width="23.4" height="6.4" rx="2" fill="#5A5A5A"/><rect x="5.2" y="0" width="2.6" height="5" fill="#5A5A5A"/><rect x="18.3" y="0" width="2.6" height="5" fill="#5A5A5A"/></svg>
<svg style="position:absolute;left:798.5px;top:1112.2px" width="26" height="27" viewBox="0 0 26 27"><rect x="1.2" y="3.4" width="23.4" height="22.4" rx="2.8" fill="none" stroke="#5A5A5A" stroke-width="2.4"/><rect x="1.2" y="3.4" width="23.4" height="6.4" rx="2" fill="#5A5A5A"/><rect x="5.2" y="0" width="2.6" height="5" fill="#5A5A5A"/><rect x="18.3" y="0" width="2.6" height="5" fill="#5A5A5A"/></svg>
</div></body></html>
